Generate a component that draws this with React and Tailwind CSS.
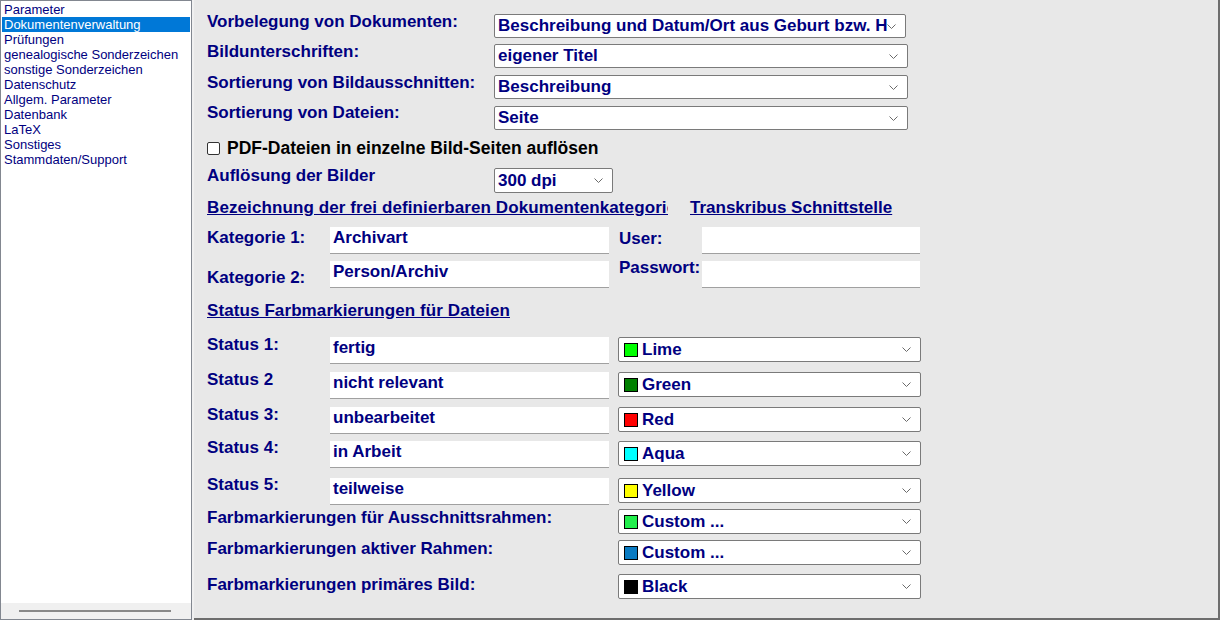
import React from 'react';

const NAVY = 'text-[#000080]';

const menu = [
  'Parameter',
  'Dokumentenverwaltung',
  'Prüfungen',
  'genealogische Sonderzeichen',
  'sonstige Sonderzeichen',
  'Datenschutz',
  'Allgem. Parameter',
  'Datenbank',
  'LaTeX',
  'Sonstiges',
  'Stammdaten/Support',
];

const Chevron = () => (
  <svg width="9" height="5" viewBox="0 0 9 5" className="shrink-0">
    <path d="M0.5 0.5 L4.5 4.5 L8.5 0.5" fill="none" stroke="#6a6a6a" strokeWidth="1" />
  </svg>
);

// dropdown box, with optional colour swatch
const Select = ({ value, width, height = 'h-[24px]', swatch }) => (
  <div
    className={`${width} ${height} shrink-0 bg-white border border-[#7a7a7a] rounded-[2px] flex items-center pr-[9px] ${
      swatch ? 'pl-[5px]' : 'pl-[3px]'
    }`}
  >
    {swatch && <span className={`w-[14px] h-[14px] border border-black shrink-0 mr-[4px] ${swatch}`} />}
    <span className={`flex-1 min-w-0 overflow-hidden whitespace-nowrap ${NAVY} font-bold text-[17px] leading-[18px]`}>
      {value}
    </span>
    <Chevron />
  </div>
);

// flat edit field
const Field = ({ value, width }) => (
  <div
    className={`${width} h-[27px] shrink-0 bg-white border-b border-[#a0a0a0] pl-[3px] pt-[2px] ${NAVY} font-bold text-[17px] leading-[18px] whitespace-nowrap overflow-hidden`}
  >
    {value}
  </div>
);

const Label = ({ children, className = '' }) => (
  <div className={`shrink-0 whitespace-nowrap ${NAVY} font-bold text-[17px] leading-[18px] ${className}`}>
    {children}
  </div>
);

const statusRows = [
  { label: 'Status 1:', value: 'fertig', color: 'Lime', swatch: 'bg-[#00ff00]', mt: 'mt-[17px]', lt: '-mt-px' },
  { label: 'Status 2', value: 'nicht relevant', color: 'Green', swatch: 'bg-[#008000]', mt: 'mt-[8px]', lt: '-mt-px' },
  { label: 'Status 3:', value: 'unbearbeitet', color: 'Red', swatch: 'bg-[#ff0000]', mt: 'mt-[8px]', lt: '-mt-px' },
  { label: 'Status 4:', value: 'in Arbeit', color: 'Aqua', swatch: 'bg-[#00ffff]', mt: 'mt-[7px]', lt: '-mt-[2px]' },
  { label: 'Status 5:', value: 'teilweise', color: 'Yellow', swatch: 'bg-[#ffff00]', mt: 'mt-[10px]', lt: '-mt-[2px]' },
];

const frameRows = [
  { label: 'Farbmarkierungen für Ausschnittsrahmen:', color: 'Custom ...', swatch: 'bg-[#22ee4c]', mt: 'mt-[4px]', lt: '' },
  { label: 'Farbmarkierungen aktiver Rahmen:', color: 'Custom ...', swatch: 'bg-[#0a7bc2]', mt: 'mt-[6px]', lt: '' },
  { label: 'Farbmarkierungen primäres Bild:', color: 'Black', swatch: 'bg-black', mt: 'mt-[9px]', lt: 'mt-[2px]' },
];

const App = () => {
  return (
    <div className="w-[1220px] h-[620px] flex bg-[#f0f0f0] font-['Liberation_Sans',Arial,sans-serif] overflow-hidden">
      {/* Left navigation list */}
      <div className="w-[192px] h-[620px] shrink-0 bg-white border border-[#828790] flex flex-col">
        <div className="flex-1 pt-px px-px">
          {menu.map((item, i) => (
            <div
              key={item}
              className={`h-[15px] pl-[2px] text-[13px] leading-[15px] whitespace-nowrap ${
                i === 1 ? 'bg-[#0078d7] text-white' : NAVY
              }`}
            >
              {item}
            </div>
          ))}
        </div>
        <div className="h-[16px] bg-[#f0f0f0] flex items-center pl-[18px]">
          <div className="w-[152px] h-[2px] bg-[#888888]" />
        </div>
      </div>

      {/* Right settings panel */}
      <div className="flex-1 ml-[2px] h-[620px] bg-[#e8e8e8] border-r-2 border-b-2 border-[#6d6d6d] pl-[13px]">
        <div className="flex h-[24px] mt-[14px]">
          <Label className="w-[287px] -mt-px">Vorbelegung von Dokumenten:</Label>
          <Select width="w-[412px]" value="Beschreibung und Datum/Ort aus Geburt bzw. Heirat" />
        </div>
        <div className="flex h-[24px] mt-[6px]">
          <Label className="w-[287px] -mt-px">Bildunterschriften:</Label>
          <Select width="w-[414px]" value="eigener Titel" />
        </div>
        <div className="flex h-[24px] mt-[7px]">
          <Label className="w-[287px] -mt-px">Sortierung von Bildausschnitten:</Label>
          <Select width="w-[414px]" value="Beschreibung" />
        </div>
        <div className="flex h-[24px] mt-[7px]">
          <Label className="w-[287px] -mt-[2px]">Sortierung von Dateien:</Label>
          <Select width="w-[414px]" value="Seite" />
        </div>

        <div className="flex items-center h-[18px] mt-[9px]">
          <span className="w-[13px] h-[13px] border border-[#333333] rounded-[2px] bg-white shrink-0" />
          <span className="ml-[7px] text-black font-bold text-[17.5px] leading-[18px] whitespace-nowrap">
            PDF-Dateien in einzelne Bild-Seiten auflösen
          </span>
        </div>

        <div className="flex h-[25px] mt-[11px]">
          <Label className="w-[287px] -mt-px">Auflösung der Bilder</Label>
          <Select width="w-[119px]" height="h-[25px]" value="300 dpi" />
        </div>

        <div className="flex h-[18px] mt-[6px]">
          <div className={`w-[461px] overflow-hidden whitespace-nowrap underline tracking-[0.1px] ${NAVY} font-bold text-[17px] leading-[18px]`}>
            Bezeichnung der frei definierbaren Dokumentenkategorien
          </div>
          <div className={`ml-[22px] whitespace-nowrap underline ${NAVY} font-bold text-[17px] leading-[18px]`}>
            Transkribus Schnittstelle
          </div>
        </div>

        <div className="flex h-[27px] mt-[10px]">
          <Label className="w-[123px] mt-[2px]">Kategorie 1:</Label>
          <Field width="w-[279px]" value="Archivart" />
          <Label className="w-[83px] ml-[10px] mt-[3px]">User:</Label>
          <Field width="w-[218px]" value="" />
        </div>
        <div className="flex h-[27px] mt-[7px]">
          <Label className="w-[123px] mt-[8px]">Kategorie 2:</Label>
          <Field width="w-[279px]" value="Person/Archiv" />
          <Label className="w-[83px] ml-[10px] -mt-[2px]">Passwort:</Label>
          <Field width="w-[218px]" value="" />
        </div>

        <div className="flex h-[18px] mt-[14px]">
          <div className={`whitespace-nowrap underline tracking-[0.1px] ${NAVY} font-bold text-[17px] leading-[18px]`}>
            Status Farbmarkierungen für Dateien
          </div>
        </div>

        {statusRows.map((row) => (
          <div key={row.label} className={`flex h-[27px] ${row.mt}`}>
            <Label className={`w-[123px] ${row.lt}`}>{row.label}</Label>
            <Field width="w-[279px]" value={row.value} />
            <div className="ml-[9px]">
              <Select width="w-[303px]" height="h-[25px]" value={row.color} swatch={row.swatch} />
            </div>
          </div>
        ))}

        {frameRows.map((row) => (
          <div key={row.label} className={`flex h-[25px] ${row.mt}`}>
            <Label className={`w-[411px] ${row.lt}`}>{row.label}</Label>
            <Select width="w-[303px]" height="h-[25px]" value={row.color} swatch={row.swatch} />
          </div>
        ))}
      </div>
    </div>
  );
};

export default App;
